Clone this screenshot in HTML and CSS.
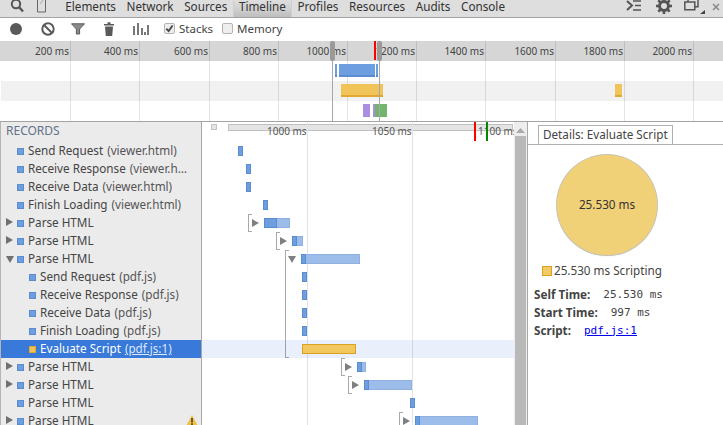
FILE: index.html
```html
<!DOCTYPE html>
<html lang="en">
<head>
<meta charset="utf-8">
<title>Timeline</title>
<link rel="stylesheet" href="styles.css">
</head>
<body>
<div class="app">
  <nav class="tabs">
    <svg class="tab-icon search" width="16" height="14" viewBox="0 0 16 14"><circle cx="6" cy="4" r="4.200" fill="none" stroke="#555" stroke-width="2"/><path d="M9 7l4 4.500" stroke="#555" stroke-width="2.400"/></svg>
    <svg class="tab-icon device" width="10" height="14" viewBox="0 0 10 14"><path d="M.5-2h8v14h-8z" fill="none" stroke="#666"/><path d="M3 4l3-4" stroke="#aaa"/></svg>
    <span class="tab">Elements</span>
    <span class="tab">Network</span>
    <span class="tab">Sources</span>
    <span class="tab active">Timeline</span>
    <span class="tab">Profiles</span>
    <span class="tab">Resources</span>
    <span class="tab">Audits</span>
    <span class="tab">Console</span>
    <span class="tab-spacer"></span>
    <svg class="tab-icon" width="16" height="12" viewBox="0 0 16 12"><path d="M1 1l5 4.500L1 10" fill="none" stroke="#555" stroke-width="2"/><path d="M7 1h8M9 5.500h6M7 10h8" stroke="#555" stroke-width="1.600"/></svg>
    <svg class="tab-icon gear" width="16" height="16" viewBox="0 0 16 16"><circle cx="8" cy="7" r="4.500" fill="none" stroke="#555" stroke-width="3"/><path d="M8 -1v3M8 12v3M0 7h3M13 7h3M2.300 1.300l2.200 2.200M11.500 10.500l2.200 2.200M13.700 1.300l-2.200 2.200M4.500 10.500l-2.200 2.200" stroke="#555" stroke-width="2.600"/></svg>
    <svg class="tab-icon dock" width="21" height="17" viewBox="0 0 21 17"><path d="M.8 4h10v7.700h-10zM4 3.500V1.200h10v7.500h-3" fill="none" stroke="#555" stroke-width="1.500"/><path d="M16 16l5-4v4z" fill="#444"/></svg>
    <svg class="tab-icon close" width="8" height="8" viewBox="0 0 8 8"><path d="M1 1l6 6M7 1L1 7" stroke="#888" stroke-width="1.500"/></svg>
  </nav>

  <div class="toolbar">
    <svg class="tool t-rec" width="12" height="12" viewBox="0 0 12 12"><circle cx="6" cy="6" r="6" fill="#5a5a5a"/></svg>
    <svg class="tool t-clear" width="14" height="14" viewBox="0 0 14 14"><circle cx="7" cy="7" r="5.700" fill="none" stroke="#5a5a5a" stroke-width="2"/><path d="M3 3l8 8" stroke="#5a5a5a" stroke-width="2"/></svg>
    <svg class="tool t-filter" width="14" height="12" viewBox="0 0 14 12"><path d="M.5.8h13L8.600 6v5H5.400V6z" fill="#8a8a8a" stroke="#5a5a5a"/></svg>
    <svg class="tool t-trash" width="10" height="14" viewBox="0 0 10 14"><path d="M0 2h10v1.600H0zM3.500.3h3v1.700h-3zM1 4.500h8L8.200 14H1.800z" fill="#5a5a5a"/></svg>
    <svg class="tool t-bars" width="18" height="12" viewBox="0 0 18 12"><path d="M1 3h2v9H1zM5 0h2v12H5zM9 5h2v7H9zM12 9h2v3h-2zM15 2h2v10h-2z" fill="#777"/></svg>
    <label class="check"><span class="box on"><svg width="11" height="11" viewBox="0 0 11 11"><path d="M2.300 5.600l2.300 2.400 4-5.500" fill="none" stroke="#444" stroke-width="1.800"/></svg></span>Stacks</label>
    <label class="check"><span class="box"></span>Memory</label>
  </div>

  <section class="overview">
    <div class="ov-ruler">
      <span class="ov-label" style="width:70px">200 ms</span>
      <span class="ov-label" style="width:69px">400 ms</span>
      <span class="ov-label" style="width:70px">600 ms</span>
      <span class="ov-label" style="width:69px">800 ms</span>
      <span class="ov-label" style="width:69px">1000 ms</span>
      <span class="ov-label" style="width:69px">1200 ms</span>
      <span class="ov-label" style="width:69px">1400 ms</span>
      <span class="ov-label" style="width:70px">1600 ms</span>
      <span class="ov-label" style="width:69px">1800 ms</span>
      <span class="ov-label" style="width:69px">2000 ms</span>
    </div>
    <div class="ov-band"></div>
    <div class="ov-band alt"></div>
    <div class="ov-band"></div>
    <i class="ov-tick" style="left:70px"></i><i class="ov-tick" style="left:139px"></i><i class="ov-tick" style="left:209px"></i><i class="ov-tick" style="left:278px"></i><i class="ov-tick" style="left:347px"></i><i class="ov-tick" style="left:416px"></i><i class="ov-tick" style="left:485px"></i><i class="ov-tick" style="left:555px"></i><i class="ov-tick" style="left:624px"></i><i class="ov-tick" style="left:693px"></i>
    <i class="ov-bar blue" style="left:335px;width:2px"></i>
    <i class="ov-bar blue" style="left:339px;width:36px"></i>
    <i class="ov-bar blue" style="left:376px;width:2px"></i>
    <i class="ov-bar yellow" style="left:341px;width:42px"></i>
    <i class="ov-bar yellow" style="left:615px;width:7px"></i>
    <i class="ov-bar purple" style="left:363px;width:1px"></i>
    <i class="ov-bar purple" style="left:364px;width:6px"></i>
    <i class="ov-bar purple" style="left:373px;width:2px"></i>
    <i class="ov-bar green" style="left:375px;width:12px"></i>
    <i class="ov-sel" style="left:332px"></i><i class="ov-sel" style="left:379px"></i>
    <i class="ov-red"></i>
    <i class="ov-handle" style="left:330px"></i><i class="ov-handle" style="left:377px"></i>
  </section>

  <main class="split">
    <aside class="records">
      <h2 class="rec-head">RECORDS</h2>
      <div class="rec"><i class="sw"></i><span class="name">Send Request</span><span class="src">(viewer.html)</span></div>
      <div class="rec"><i class="sw"></i><span class="name">Receive Response</span><span class="src clip">(viewer.h…</span></div>
      <div class="rec"><i class="sw"></i><span class="name">Receive Data</span><span class="src">(viewer.html)</span></div>
      <div class="rec"><i class="sw"></i><span class="name">Finish Loading</span><span class="src">(viewer.html)</span></div>
      <div class="rec"><b class="arrow"></b><i class="sw"></i><span class="name">Parse HTML</span></div>
      <div class="rec"><b class="arrow"></b><i class="sw"></i><span class="name">Parse HTML</span></div>
      <div class="rec"><b class="arrow open"></b><i class="sw"></i><span class="name">Parse HTML</span></div>
      <div class="rec child"><i class="sw"></i><span class="name">Send Request</span><span class="src">(pdf.js)</span></div>
      <div class="rec child"><i class="sw"></i><span class="name">Receive Response</span><span class="src">(pdf.js)</span></div>
      <div class="rec child"><i class="sw"></i><span class="name">Receive Data</span><span class="src">(pdf.js)</span></div>
      <div class="rec child"><i class="sw"></i><span class="name">Finish Loading</span><span class="src">(pdf.js)</span></div>
      <div class="rec child selected"><i class="sw script"></i><span class="name">Evaluate Script</span><span class="src link">(pdf.js:1)</span></div>
      <div class="rec"><b class="arrow"></b><i class="sw"></i><span class="name">Parse HTML</span></div>
      <div class="rec"><b class="arrow"></b><i class="sw"></i><span class="name">Parse HTML</span></div>
      <div class="rec"><i class="sw"></i><span class="name">Parse HTML</span></div>
      <div class="rec"><b class="arrow"></b><i class="sw"></i><span class="name">Parse HTML</span><svg class="warn" width="12" height="11" viewBox="0 0 12 11"><path d="M6 0l6 11H0z" fill="#f0c040"/><path d="M5.200 3h1.600v4.500H5.200zM5.200 8.300h1.600V10H5.200z" fill="#444"/></svg></div>
    </aside>

    <section class="chart">
      <div class="chart-main">
        <div class="chart-head">
          <i class="range-knob"></i>
          <i class="range-bar"></i>
          <span class="c-label" style="left:65px">1000 ms</span>
          <span class="c-label" style="left:170px">1050 ms</span>
          <span class="c-label" style="left:276px">1100 ms</span>
          <i class="mark red"></i><i class="mark green"></i>
        </div>
        <div class="rows">
          <i class="grid" style="left:105px"></i><i class="grid" style="left:210px"></i>
          <div class="row"><i class="bar" style="left:36px;width:5px"></i></div>
          <div class="row"><i class="bar" style="left:44px;width:5px"></i></div>
          <div class="row"><i class="bar" style="left:44px;width:5px"></i></div>
          <div class="row"><i class="bar" style="left:61px;width:5px"></i></div>
          <div class="row"><i class="brk" style="left:46px"></i><i class="tri" style="left:50px"></i><i class="bar wide" style="left:62px;width:26px"></i><i class="bar" style="left:62px;width:13px"></i></div>
          <div class="row"><i class="brk" style="left:74px"></i><i class="tri" style="left:78px"></i><i class="bar wide" style="left:90px;width:11px"></i><i class="bar" style="left:90px;width:5px"></i></div>
          <div class="row"><i class="brk long" style="left:83px"></i><i class="tri down" style="left:86px"></i><i class="bar wide" style="left:99px;width:59px"></i><i class="bar" style="left:99px;width:5px"></i></div>
          <div class="row"><i class="bar" style="left:100px;width:5px"></i></div>
          <div class="row"><i class="bar" style="left:100px;width:5px"></i></div>
          <div class="row"><i class="bar" style="left:100px;width:5px"></i></div>
          <div class="row"><i class="bar" style="left:100px;width:5px"></i></div>
          <div class="row hl"><i class="bar script" style="left:100px;width:54px"></i></div>
          <div class="row"><i class="brk" style="left:139px"></i><i class="tri" style="left:143px"></i><i class="bar wide" style="left:155px;width:9px"></i><i class="bar" style="left:155px;width:5px"></i></div>
          <div class="row"><i class="brk" style="left:146px"></i><i class="tri" style="left:150px"></i><i class="bar wide" style="left:162px;width:48px"></i><i class="bar" style="left:162px;width:5px"></i></div>
          <div class="row"><i class="bar" style="left:208px;width:5px"></i></div>
          <div class="row"><i class="brk" style="left:197px"></i><i class="tri" style="left:201px"></i><i class="bar wide" style="left:213px;width:63px"></i><i class="bar" style="left:213px;width:5px"></i></div>
        </div>
      </div>
      <div class="scroll">
        <svg class="scroll-up" width="9" height="5" viewBox="0 0 9 5"><path d="M0 5l4.500-5 4.500 5z" fill="#aaa"/></svg>
        <div class="thumb"></div>
      </div>
    </section>

    <aside class="details">
      <div class="d-tabs"><span class="d-tab">Details: Evaluate Script</span></div>
      <div class="pie-wrap"><div class="pie">25.530 ms</div></div>
      <div class="legend"><i class="lg-sw"></i>25.530 ms Scripting</div>
      <div class="kv first"><b>Self Time:</b><code class="v1">25.530 ms</code></div>
      <div class="kv"><b>Start Time:</b><code class="v2">997 ms</code></div>
      <div class="kv"><b>Script:</b><a class="v3" href="#">pdf.js:1</a></div>
    </aside>
  </main>
</div>
</body>
</html>
```
FILE: styles.css
```css
* { box-sizing: border-box; }
html, body { margin: 0; padding: 0; }
body { width: 723px; height: 425px; overflow: hidden; background: #fff; font-family: "Noto Sans", sans-serif; font-size: 11.7px; color: #333; }
i, b { display: block; font-style: normal; }
.app { display: flex; flex-direction: column; height: 425px; }

.tabs { height: 18px; flex: none; display: flex; align-items: flex-start; background: #dedede; border-bottom: 1px solid #a3a3a3; }
.tab { height: 17px; padding: 0 5.300px; line-height: 13px; font-size: 11.7px; color: #333; white-space: nowrap; }
.tab.active { background: linear-gradient(#dedede, #cfcfcf 55%, #bdbdbd); border-left: 1px solid #cfcfcf; border-right: 1px solid #cfcfcf; }
.tab-spacer { flex: 1; }
.tab-icon { flex: none; display: block; }
.search { margin-left: 10px; }
.device { margin-left: 11px; margin-right: 13px; }
.gear { margin: -1px 0 0 14px; }
.dock { margin: -2px 0 0 12px; }
.close { margin: 3px 3px 0 7px; }

.toolbar { height: 23px; flex: none; display: flex; align-items: center; padding: 0 0 2px 10px; background: #fff; }
.tool { display: block; flex: none; }
.t-clear { margin-left: 19px; }
.t-filter { margin-left: 16px; }
.t-trash { margin-left: 19px; }
.t-bars { margin-left: 18px; }
.check { display: flex; align-items: center; color: #444; margin-left: 14px; font-size: 11.5px; }
.check + .check { margin-left: 9px; }
.box { width: 11px; height: 11px; margin-right: 4px; border: 1px solid #b4b4b4; border-radius: 2px; background: #eee; display: block; }
.box svg { display: block; margin: -1px; }

.overview { position: relative; height: 80px; flex: none; }
.ov-ruler { height: 20px; display: flex; background: #d6d6d6; }
.ov-label { flex: none; text-align: right; padding-right: 1px; font-size: 10px; line-height: 20px; color: #444; white-space: nowrap; }
.ov-band { height: 20px; }
.ov-band.alt { background: #f1f1f1; margin-left: 1px; }
.ov-tick { position: absolute; top: 0; bottom: 0; width: 1px; background: rgba(0,0,0,.11); }
.ov-bar { position: absolute; height: 13px; }
.ov-bar.blue { top: 23px; background: #6d9fe0; border-bottom: 2px solid #5c8cd0; }
.ov-bar.yellow { top: 43px; background: #f0c459; border-bottom: 2px solid #e0a830; }
.ov-bar.purple { top: 63px; background: #a88fe2; }
.ov-bar.green { top: 63px; background: #74b56e; }
.ov-sel { position: absolute; top: 0; bottom: 0; width: 1px; background: #a8a8a8; }
.ov-red { position: absolute; top: 0; left: 374px; width: 2px; height: 19px; background: #f00; }
.ov-handle { position: absolute; top: 0; width: 5px; height: 20px; border-radius: 2px; background: #9a9a9a; }

.split { flex: 1; min-height: 0; display: flex; border-top: 1px solid #a3a3a3; }
.records { width: 202px; flex: none; background: #ebebeb; border-left: 1px solid #b5b5b5; border-right: 1px solid #a8a8a8; overflow: hidden; }
.rec-head { margin: 0; height: 20px; padding-left: 5px; font-size: 12px; font-weight: 400; line-height: 18px; color: #62738a; }
.rec { height: 18px; display: flex; align-items: center; padding: 0 0 1px 16px; line-height: 17px; white-space: nowrap; color: #444; position: relative; }
.rec.child { padding-left: 28px; }
.sw { width: 7px; height: 7px; flex: none; margin: 2px 4px 0 0; background: #6d9fe0; border: 1px solid #5c8cd0; }
.sw.script { background: #f0c459; border-color: #e0a830; }
.name { margin-right: 4px; }
.src { color: #555; }
.arrow { position: absolute; left: 5px; top: 4px; width: 0; height: 0; border-left: 7px solid #707070; border-top: 4px solid transparent; border-bottom: 4px solid transparent; }
.arrow.open { left: 5px; top: 6px; border-top: 7px solid #707070; border-left: 4px solid transparent; border-right: 4px solid transparent; border-bottom: 0; }
.selected { background: #3879d9; color: #fff; }
.selected .src { color: #dde8fa; text-decoration: underline; }
.warn { position: absolute; left: 185px; top: 3px; }

.chart { width: 326px; flex: none; display: flex; }
.chart-main { flex: 1; min-width: 0; overflow: hidden; position: relative; }
.chart-head { position: relative; height: 20px; }
.range-knob { position: absolute; left: 9px; top: 2px; width: 6px; height: 6px; background: #e4e4e4; border: 1px solid #c4c4c4; }
.range-bar { position: absolute; left: 26px; right: 1px; top: 2px; height: 7px; background: #e4e4e4; border: 1px solid #c0c0c0; }
.c-label { position: absolute; top: 1px; font-size: 10px; line-height: 16px; color: #555; white-space: nowrap; }
.mark { position: absolute; top: 0; width: 2px; height: 19px; }
.mark.red { left: 272px; background: #f00; }
.mark.green { left: 284px; background: #080; }
.rows { position: relative; }
.grid { position: absolute; top: -20px; bottom: -20px; width: 1px; background: #e2e2e2; }
.row { position: relative; height: 18px; }
.row.hl { background: rgba(56,121,217,.11); }
.bar { position: absolute; top: 4px; height: 10px; background: #6d9fe0; border: 1px solid #5c8cd0; }
.bar.wide { background: #9cbcea; border-color: #8fb0e0; }
.bar.script { background: #f3c75f; border-color: #d9a21f; }
.brk { position: absolute; top: 0; width: 4px; height: 18px; border: 1px solid #a8a8a8; border-right: 0; }
.brk.long { height: 108px; }
.tri { position: absolute; top: 5px; width: 0; height: 0; border-left: 7px solid #808080; border-top: 4px solid transparent; border-bottom: 4px solid transparent; }
.tri.down { top: 6px; border-top: 7px solid #808080; border-left: 4px solid transparent; border-right: 4px solid transparent; border-bottom: 0; }

.scroll { width: 14px; flex: none; background: #ededed; padding: 6px 1px 0; display: flex; flex-direction: column; align-items: center; border-right: 1px solid #a8a8a8; }
.scroll-up { display: block; flex: none; }
.thumb { flex: 1; width: 100%; margin-top: 3px; background: #b9b9b9; }

.details { flex: 1; min-width: 0; }
.d-tabs { height: 23px; padding: 3px 0 0 10px; border-bottom: 1px solid #b0b0b0; display: flex; }
.d-tab { height: 20px; padding: 0 4px; line-height: 16px; border: 1px solid #b0b0b0; border-bottom: 0; color: #444; white-space: nowrap; }
.pie-wrap { padding: 10px 0 0 29px; }
.pie { width: 100px; height: 100px; padding-bottom: 2px; border-radius: 50%; background: #f1d178; box-shadow: 0 0 0 1px #c9c4b2, 0 1px 1px #aaa; display: flex; align-items: center; justify-content: center; color: #333; }
.legend { display: flex; align-items: center; height: 18px; margin-top: 6px; padding-left: 14px; color: #444; }
.lg-sw { width: 10px; height: 10px; margin: 2px 2px 0 0; background: #f1c965; border: 1px solid #d9a21f; }
.kv { display: flex; height: 18px; align-items: center; padding-left: 6px; color: #444; }
.kv.first { margin-top: 6px; }
.kv b { font-weight: 700; }
.kv code, .kv a { font-family: "DejaVu Sans Mono", monospace; font-size: 11px; }
.v1 { margin-left: 13px; }
.v2 { margin-left: 13px; }
.v3 { margin-left: 13px; color: #00e; text-decoration: underline; }
```
